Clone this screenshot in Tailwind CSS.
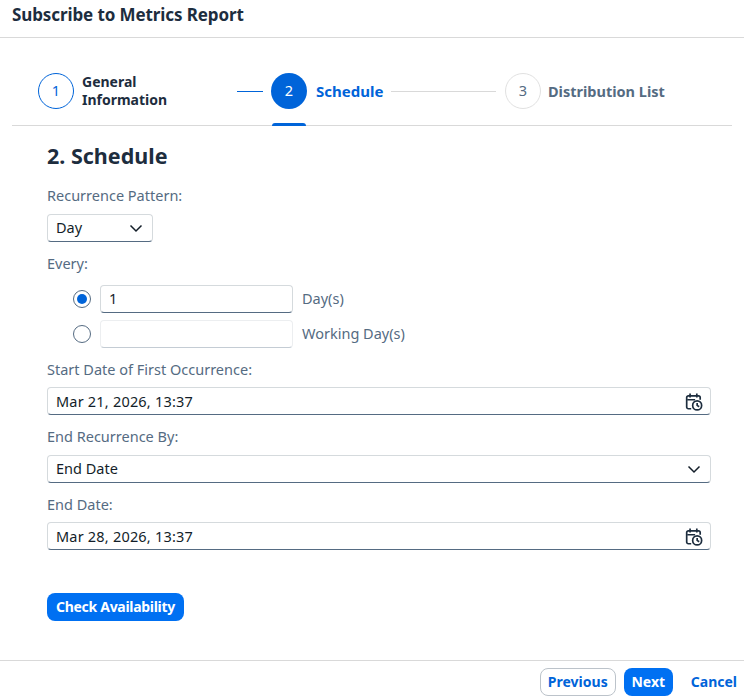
<!DOCTYPE html>
<html lang="en">
<head>
  <meta charset="UTF-8">
  <title>Subscribe to Metrics Report</title>
  <script src="https://cdn.jsdelivr.net/npm/@tailwindcss/browser@4"></script>
</head>
<body class="bg-white w-[744px] h-[700px] overflow-hidden font-['Noto_Sans',sans-serif] text-[14.5px] text-[#131e29]">
  <div class="flex flex-col h-[700px]">

    <!-- header -->
    <div class="h-[38px] shrink-0 border-b border-[#d9d9d9] pl-3 pb-[7px] flex items-center font-bold text-[17px] text-[#1d2d3e] tracking-[-0.1px]">Subscribe to Metrics Report</div>

    <!-- stepper -->
    <div class="h-[88px] shrink-0 mx-3 border-b border-[#d9d9d9] flex items-start pl-[26px] pt-[35px]">
      <div class="w-9 h-9 rounded-full border border-[#0064d9] text-[#0064d9] flex items-center justify-center shrink-0">1</div>
      <div class="ml-2 w-[155px] font-bold text-[14px] leading-[18px] text-[#1d2d3e]">General<br>Information</div>
      <div class="w-[26px] h-px bg-[#0064d9] mt-[18px]"></div>
      <div class="relative ml-2 w-9 h-[53px] shrink-0">
        <div class="w-9 h-9 rounded-full bg-[#0064d9] text-white flex items-center justify-center">2</div>
        <div class="absolute left-px right-px bottom-0 h-[3px] rounded-t-[3px] bg-[#0064d9]"></div>
      </div>
      <div class="ml-[9px] w-[67px] font-bold text-[15px] leading-9 text-[#0064d9]">Schedule</div>
      <div class="w-[105px] h-px bg-[#d9d9d9] mt-[18px] ml-2"></div>
      <div class="ml-[9px] w-9 h-9 rounded-full border border-[#e1e1e1] text-[#556b82] flex items-center justify-center shrink-0">3</div>
      <div class="ml-[7px] font-bold text-[14.5px] leading-9 text-[#556b82]">Distribution List</div>
    </div>

    <!-- form -->
    <div class="flex-1 pl-[47px] pr-[33px]">
      <h2 class="font-bold text-[21.5px] leading-[22px] mt-[19px] text-[#1d2d3e]">2. Schedule</h2>

      <div class="text-[#556b82] leading-4 mt-5">Recurrence Pattern:</div>
      <div class="w-[106px] h-7 mt-[11px] pl-2 pr-[9px] pb-px flex items-center justify-between rounded-[4px] border border-[#d5dadd] border-b-[#556b82] bg-white">
        <span>Day</span>
        <svg class="w-[14px] h-[14px]" viewBox="0 0 14 14" fill="none" stroke="#131e29" stroke-width="1.5"><path d="M1.500 4.500 7 10l5.500-5.500"/></svg>
      </div>

      <div class="text-[#556b82] leading-4 mt-[13px]">Every:</div>
      <div class="flex items-center h-7 mt-[14px] pl-[26px]">
        <div class="w-[18px] h-[18px] rounded-full border border-[#556b82] flex items-center justify-center shrink-0">
          <div class="w-[10px] h-[10px] rounded-full bg-[#0064d9]"></div>
        </div>
        <div class="ml-[9px] w-[193px] h-7 px-2 pb-px flex items-center rounded-[4px] border border-[#d5dadd] border-b-[#556b82]">1</div>
        <span class="ml-[9px] pb-px text-[#556b82]">Day(s)</span>
      </div>
      <div class="flex items-center h-7 mt-[7px] pl-[26px]">
        <div class="w-[18px] h-[18px] rounded-full border border-[#556b82] shrink-0"></div>
        <div class="ml-[9px] w-[193px] h-7 rounded-[4px] border border-[#eceef0] border-b-[#c4ccd4]"></div>
        <span class="ml-[9px] pb-px text-[#556b82]">Working Day(s)</span>
      </div>

      <div class="text-[#556b82] leading-4 mt-[13px]">Start Date of First Occurrence:</div>
      <div class="h-7 mt-[10px] pl-2 pr-[7px] pt-px flex items-center justify-between rounded-[4px] border border-[#d5dadd] border-b-[#556b82]">
        <span class="tracking-[0.2px]">Mar 21, 2026, 13:37</span>
        <svg class="w-[18px] h-[18px]" viewBox="0 0 16 16" fill="none" stroke="#1d2d3e" stroke-width="1.5"><path d="M5.500 14H3a1.500 1.500 0 0 1-1.500-1.500V4A1.500 1.500 0 0 1 3 2.500h9A1.500 1.500 0 0 1 13.500 4v2"/><path d="M4.500 .5v3.500M10.500 .5v3.500M2 6h7"/><circle cx="10.800" cy="11" r="4"/><path d="M10.800 8.800V11l1.800 1.200"/></svg>
      </div>

      <div class="text-[#556b82] leading-4 mt-[13px]">End Recurrence By:</div>
      <div class="h-7 mt-[11px] pl-2 pr-[9px] flex items-center justify-between rounded-[4px] border border-[#d5dadd] border-b-[#556b82]">
        <span>End Date</span>
        <svg class="w-[14px] h-[14px]" viewBox="0 0 14 14" fill="none" stroke="#131e29" stroke-width="1.5"><path d="M1.500 4.500 7 10l5.500-5.500"/></svg>
      </div>

      <div class="text-[#556b82] leading-4 mt-[13px]">End Date:</div>
      <div class="h-7 mt-[10px] pl-2 pr-[7px] pt-px flex items-center justify-between rounded-[4px] border border-[#d5dadd] border-b-[#556b82]">
        <span class="tracking-[0.2px]">Mar 28, 2026, 13:37</span>
        <svg class="w-[18px] h-[18px]" viewBox="0 0 16 16" fill="none" stroke="#1d2d3e" stroke-width="1.5"><path d="M5.500 14H3a1.500 1.500 0 0 1-1.500-1.500V4A1.500 1.500 0 0 1 3 2.500h9A1.500 1.500 0 0 1 13.500 4v2"/><path d="M4.500 .5v3.500M10.500 .5v3.500M2 6h7"/><circle cx="10.800" cy="11" r="4"/><path d="M10.800 8.800V11l1.800 1.200"/></svg>
      </div>

      <button class="block mt-[43px] h-7 w-[137px] pb-[2px] rounded-lg bg-[#0070f2] text-white font-bold text-[14px] tracking-[-0.3px]">Check Availability</button>
    </div>

    <!-- footer -->
    <div class="h-10 shrink-0 border-t border-[#d9d9d9] flex items-start justify-end pt-[7px] pr-[7px] font-bold text-[14px]">
      <button class="h-7 w-[76px] pb-[2px] rounded-lg border border-[#bcc3ca] text-[#0064d9] bg-white">Previous</button>
      <button class="h-7 w-[49px] ml-2 pb-[2px] rounded-lg bg-[#0070f2] text-white">Next</button>
      <button class="h-7 ml-[18px] pb-[2px] text-[#0064d9]">Cancel</button>
    </div>
  </div>
</body>
</html>
